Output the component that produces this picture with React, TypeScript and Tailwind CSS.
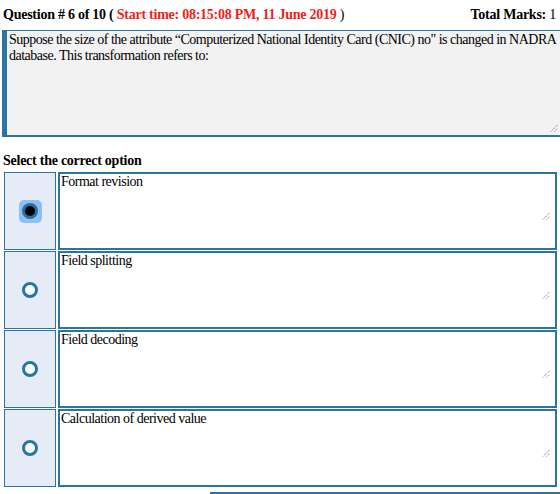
import React, { useState } from 'react';

const OPTIONS = [
  'Format revision',
  'Field splitting',
  'Field decoding',
  'Calculation of derived value',
];

const Radio: React.FC<{ checked: boolean; onSelect: () => void }> = ({ checked, onSelect }) => {
  if (checked) {
    return (
      <button
        onClick={onSelect}
        className="w-[23px] h-[23px] rounded-[5px] bg-[#8cc0f4] flex items-center justify-center"
      >
        <span className="w-[16px] h-[16px] rounded-full bg-[#2c6f9c] flex items-center justify-center">
          <span className="w-[10px] h-[10px] rounded-full bg-black" />
        </span>
      </button>
    );
  }
  return (
    <button
      onClick={onSelect}
      className="w-[16px] h-[16px] rounded-full border-[3px] border-[#2a74a0] bg-white"
    />
  );
};

const ResizeGrip: React.FC<{ className?: string }> = ({ className }) => (
  <svg width="8" height="8" viewBox="0 0 8 8" className={className}>
    <path d="M1 7.5 L7.5 1 M4.5 7.5 L7.5 4.5" stroke="#666" strokeWidth="1" strokeDasharray="1 1" />
  </svg>
);

const App: React.FC = () => {
  const [selected, setSelected] = useState(0);

  return (
    <div
      className="w-[560px] h-[494px] overflow-hidden bg-white text-black text-[14px] tracking-[-0.5px]"
      style={{ fontFamily: '"Liberation Serif", "Times New Roman", serif' }}
    >
      <div className="flex items-end justify-between pl-[3px] pr-[4px] h-[28px] pb-[3px] tracking-[-0.25px]">
        <div>
          <span className="font-bold">Question # 6 of 10 ( </span>
          <span className="font-bold text-[#f41d1d]">Start time: 08:15:08 PM, 11 June 2019</span>
          <span> )</span>
        </div>
        <div className="text-black">
          <span className="font-bold">Total Marks: </span>
          <span className="text-black">1</span>
        </div>
      </div>

      <div className="ml-[2px] mt-[2px] h-[107px] bg-[#f2f2f2] border-t border-b-2 border-[#2a74a0] border-l-[5px] relative">
        <p className="pl-[2px] pt-[1px] pr-[4px] leading-[16px]">
          Suppose the size of the attribute “Computerized National Identity Card (CNIC) no" is changed in NADRA
          database. This transformation refers to:
        </p>
        <ResizeGrip className="absolute right-[2px] bottom-[3px]" />
      </div>

      <div className="font-bold pl-[3px] mt-[16px] leading-[16px] tracking-[-0.25px]">Select the correct option</div>

      <div className="flex flex-col gap-[1px] mt-[3px] pl-[4px] pr-[3px]">
        {OPTIONS.map((opt, i) => (
          <div key={opt} className="flex gap-[2px] h-[78px]">
            <div className="w-[52px] shrink-0 bg-[#e6ecf6] border border-[#2a74a0] flex items-center justify-center">
              <Radio checked={selected === i} onSelect={() => setSelected(i)} />
            </div>
            <div className="flex-1 border-2 border-[#2a74a0] bg-white relative">
              <div className="pl-[1px] leading-[16px]">{opt}</div>
              <ResizeGrip className="absolute right-[5px] bottom-[28px]" />
            </div>
          </div>
        ))}
      </div>

      <div className="ml-[210px] mt-[5px] h-[10px] border-t-2 border-[#2a74a0]" />
    </div>
  );
};

export default App;
